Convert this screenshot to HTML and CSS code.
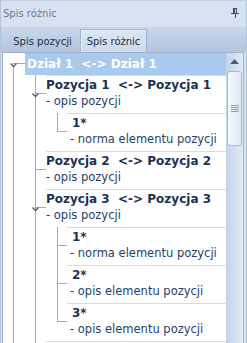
FILE: index.html
```html
<!DOCTYPE html>
<html lang="pl">
<head>
<meta charset="utf-8">
<title>Spis różnic</title>
<link rel="stylesheet" href="styles.css">
</head>
<body>
<div class="window">
  <div class="titlebar">
    <span class="title">Spis różnic</span>
    <svg class="pin" width="8" height="10" viewBox="0 0 8 10" aria-hidden="true">
      <rect x="2.5" y="0.5" width="3" height="5" fill="none" stroke="#3b4c66"/>
      <rect x="2" y="0" width="2" height="6" fill="#3b4c66"/>
      <rect x="0" y="5" width="8" height="1" fill="#3b4c66"/>
      <rect x="4" y="6" width="1" height="4" fill="#3b4c66"/>
    </svg>
  </div>
  <div class="tabs">
    <div class="tab">Spis pozycji</div>
    <div class="tab active">Spis różnic</div>
  </div>
  <div class="panel">
    <div class="tree">
      <div class="row root-row">
        <div class="cell c0 rootline">
          <svg class="chev" width="7" height="5" viewBox="0 0 7 5"><polyline points="0.5,0.5 3.5,3.5 6.5,0.5" fill="none" stroke="#4b5b72" stroke-width="1.3"/></svg>
        </div>
        <div class="root-label">Dział 1&nbsp; &lt;-&gt; Dział 1</div>
      </div>

      <div class="row">
        <div class="cell c0 v"></div>
        <div class="cell c1 vt">
          <svg class="chev" width="7" height="5" viewBox="0 0 7 5"><polyline points="0.5,0.5 3.5,3.5 6.5,0.5" fill="none" stroke="#4b5b72" stroke-width="1.3"/></svg>
        </div>
        <div class="content pos">
          <div class="t">Pozycja 1&nbsp; &lt;-&gt; Pozycja 1</div>
          <div class="d">- opis pozycji</div>
        </div>
      </div>

      <div class="row">
        <div class="cell c0 v"></div>
        <div class="cell c1 v"></div>
        <div class="cell c2 ve"></div>
        <div class="content el">
          <div class="t">1*</div>
          <div class="d">- norma elementu pozycji</div>
        </div>
      </div>

      <div class="row">
        <div class="cell c0 v"></div>
        <div class="cell c1 vt"></div>
        <div class="content pos">
          <div class="t">Pozycja 2&nbsp; &lt;-&gt; Pozycja 2</div>
          <div class="d">- opis pozycji</div>
        </div>
      </div>

      <div class="row">
        <div class="cell c0 v"></div>
        <div class="cell c1 vt">
          <svg class="chev" width="7" height="5" viewBox="0 0 7 5"><polyline points="0.5,0.5 3.5,3.5 6.5,0.5" fill="none" stroke="#4b5b72" stroke-width="1.3"/></svg>
        </div>
        <div class="content pos">
          <div class="t">Pozycja 3&nbsp; &lt;-&gt; Pozycja 3</div>
          <div class="d">- opis pozycji</div>
        </div>
      </div>

      <div class="row">
        <div class="cell c0 v"></div>
        <div class="cell c1 v"></div>
        <div class="cell c2 vt"></div>
        <div class="content el">
          <div class="t">1*</div>
          <div class="d">- norma elementu pozycji</div>
        </div>
      </div>

      <div class="row">
        <div class="cell c0 v"></div>
        <div class="cell c1 v"></div>
        <div class="cell c2 vt"></div>
        <div class="content el">
          <div class="t">2*</div>
          <div class="d">- opis elementu pozycji</div>
        </div>
      </div>

      <div class="row">
        <div class="cell c0 v"></div>
        <div class="cell c1 v"></div>
        <div class="cell c2 ve"></div>
        <div class="content el">
          <div class="t">3*</div>
          <div class="d">- opis elementu pozycji</div>
        </div>
      </div>

      <div class="row">
        <div class="cell c0 v"></div>
        <div class="cell c1 v"></div>
        <div class="content pos"></div>
      </div>
    </div>
    <div class="scrollbar">
      <div class="sb-btn">
        <svg width="9" height="5" viewBox="0 0 9 5"><polygon points="4.5,0 9,5 0,5" fill="#4d5f7a"/></svg>
      </div>
      <div class="thumb">
        <div class="grip"></div>
      </div>
      <div class="track"></div>
    </div>
  </div>
</div>
</body>
</html>
```
FILE: styles.css
```css
html, body {
  margin: 0;
  padding: 0;
  overflow: hidden;
}
body {
  width: 247px;
  height: 343px;
  font-family: "DejaVu Sans", Verdana, sans-serif;
}
.window {
  width: 247px;
  height: 343px;
  box-sizing: border-box;
  border-left: 1px solid #b3c3d8;
  border-right: 1px solid #b3c3d8;
  background: #d6e2f2;
  display: flex;
  flex-direction: column;
}
.titlebar {
  height: 27px;
  flex: none;
  box-sizing: border-box;
  border-top: 1px solid #c2d0e2;
  display: flex;
  align-items: center;
  padding: 0 7px 0 2px;
  background: #d6e2f2;
}
.title {
  flex: 1;
  font-size: 10px;
  color: #6c7788;
  line-height: 14px;
}
.pin {
  display: block;
  margin-top: -2px;
}
.tabs {
  height: 25px;
  flex: none;
  box-sizing: border-box;
  display: flex;
  align-items: flex-end;
  padding-left: 4px;
  background: linear-gradient(#c8d7eb, #b2c5df);
}
.tab {
  height: 23px;
  box-sizing: border-box;
  display: flex;
  align-items: center;
  justify-content: center;
  font-size: 10px;
  color: #1e2d44;
  padding-top: 1px;
}
.tab:first-child {
  width: 75px;
}
.tab.active {
  width: 67px;
  border: 1px solid #a1b4ce;
  border-bottom: none;
  background: linear-gradient(#dbe6f4, #cbdaee);
  box-shadow: inset 1px 1px 0 #e9f0f9;
}
.panel {
  flex: 1;
  min-height: 0;
  margin: 0 2px 0 1px;
  border: 1px solid #9fb1ca;
  border-bottom: none;
  display: flex;
  overflow: hidden;
}
.tree {
  flex: 1;
  min-width: 0;
  background: #fff;
  overflow: hidden;
  --lc: #9aabc6;
}
.row {
  display: flex;
  height: 38px;
}
.row.root-row {
  height: 22px;
}
.cell {
  flex: none;
  box-sizing: border-box;
  display: flex;
  align-items: flex-start;
}
.c0 { width: 22px; --o: 10px; }
.c1 { width: 21px; --o: 10px; }
.c2 { width: 21px; --o: 11px; }
.chev {
  display: block;
  margin-left: calc(var(--o) - 3px);
  margin-top: 18px;
}
.root-row .chev {
  margin-top: 10px;
}
.v {
  background: linear-gradient(var(--lc), var(--lc)) var(--o) 0 / 1px 100% no-repeat;
}
.vt {
  background:
    linear-gradient(var(--lc), var(--lc)) var(--o) 0 / 1px 100% no-repeat,
    linear-gradient(var(--lc), var(--lc)) var(--o) 18px / 100% 1px no-repeat;
}
.ve {
  background:
    linear-gradient(var(--lc), var(--lc)) var(--o) 0 / 1px 19px no-repeat,
    linear-gradient(var(--lc), var(--lc)) var(--o) 18px / 100% 1px no-repeat;
}
.rootline {
  background:
    linear-gradient(var(--lc), var(--lc)) var(--o) 13px / 1px 100% no-repeat,
    linear-gradient(var(--lc), var(--lc)) var(--o) 10px / 100% 1px no-repeat;
}
.root-label {
  flex: 1;
  background: #a9c9ef;
  color: #fff;
  font-weight: bold;
  font-size: 12px;
  line-height: 22px;
  padding-left: 2px;
  white-space: nowrap;
}
.content {
  flex: 1;
  min-width: 0;
  box-sizing: border-box;
  border-top: 1px solid #d6dce6;
  padding-top: 1px;
  white-space: nowrap;
}
.content.el {
  padding-left: 3px;
}
.t {
  font-weight: bold;
  font-size: 12px;
  line-height: 16px;
  color: #1d3152;
}
.el .t {
  padding-left: 2px;
}
.d {
  font-size: 11.5px;
  line-height: 16px;
  color: #27406c;
}
.scrollbar {
  flex: none;
  width: 17px;
  display: flex;
  flex-direction: column;
  background: linear-gradient(to right, #c4d4ea, #e1e9f5);
}
.sb-btn {
  height: 17px;
  flex: none;
  display: flex;
  align-items: center;
  justify-content: center;
  padding-bottom: 1px;
  box-sizing: border-box;
}
.thumb {
  height: 75px;
  flex: none;
  margin: 1px 1px 0 1px;
  box-sizing: border-box;
  border: 1px solid #a6b9d3;
  border-radius: 3px;
  background: linear-gradient(to right, #f5f8fc, #dfe8f4);
  display: flex;
  align-items: center;
  justify-content: center;
}
.grip {
  width: 8px;
  height: 7px;
  background: repeating-linear-gradient(#8d9eb8 0 1px, transparent 1px 2px);
}
.track {
  flex: 1;
}
```
